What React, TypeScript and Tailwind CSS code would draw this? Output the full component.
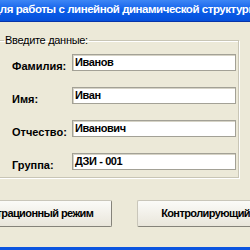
import React from 'react';

const rows = [
  { label: 'Фамилия:', value: 'Иванов' },
  { label: 'Имя:', value: 'Иван' },
  { label: 'Отчество:', value: 'Иванович' },
  { label: 'Группа:', value: 'ДЗИ - 001' },
];

const font = { fontFamily: '"Liberation Sans", Arial, sans-serif' };

export default function App() {
  return (
    <div className="w-[250px] h-[250px] overflow-hidden bg-[#ECE9D8] flex flex-col text-black" style={font}>
      {/* title bar */}
      <div className="h-[22px] shrink-0 flex items-center bg-gradient-to-b from-[#3D86F5] via-[#0A5DE9] to-[#0650DA] border-b border-[#0734A8]">
        <span className="ml-[-7px] mt-[-1px] whitespace-nowrap text-white font-bold text-[11.5px] tracking-[-0.45px] leading-none">
          для работы с линейной динамической структуры
        </span>
      </div>

      {/* group box */}
      <fieldset className="mt-[12px] ml-[-6px] w-[245px] shrink-0 border border-[#C8C5B5] shadow-[inset_1px_1px_0_#fff,1px_1px_0_#fff] pl-[17px] pr-[2px] pb-[7px]">
        <legend className="ml-[-8px] px-[1px] text-[11px] leading-[13px] tracking-[-0.3px]">Введите данные:</legend>
        <div className="flex flex-col gap-[16px] pt-[7px]">
          {rows.map((r) => (
            <div key={r.label} className="flex items-center h-[17px]">
              <span className="w-[60px] shrink-0 translate-y-[4px] text-[11px] leading-[17px] font-bold whitespace-nowrap">{r.label}</span>
              <div className="flex-1 h-[17px] bg-white border border-[#A3A196] shadow-[inset_1px_1px_0_#D6D3C6] pl-[2px] text-[11px] leading-[14px] font-bold tracking-[-0.4px]">
                {r.value}
              </div>
            </div>
          ))}
        </div>
      </fieldset>

      {/* buttons */}
      <div className="mt-[22px] ml-[-60px] flex gap-[25px] shrink-0">
        <button className="w-[172px] h-[27px] shrink-0 rounded-[2px] border border-[#C9C6BA] border-b-[#85837A] border-r-[#85837A] bg-gradient-to-b from-[#FBFBF8] to-[#E9E6DB] text-[11px] font-bold tracking-[-0.6px] whitespace-nowrap">
          Демонстрационный режим
        </button>
        <button className="w-[172px] h-[27px] shrink-0 rounded-[2px] border border-[#C9C6BA] border-b-[#85837A] border-r-[#85837A] bg-gradient-to-b from-[#FBFBF8] to-[#E9E6DB] text-[11px] font-bold tracking-[-0.6px] whitespace-nowrap">
          Контролирующий режим
        </button>
      </div>

      <div className="mt-auto h-[3px] shrink-0 bg-[#0B55E0]" />
    </div>
  );
}
